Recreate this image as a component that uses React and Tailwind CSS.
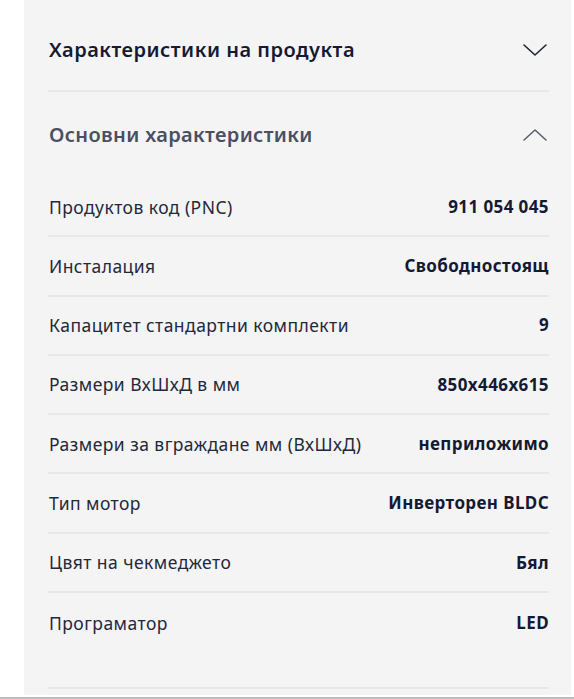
import React from "react";

const rows = [
  { label: "Продуктов код (PNC)", value: "911 054 045" },
  { label: "Инсталация", value: "Свободностоящ" },
  { label: "Капацитет стандартни комплекти", value: "9" },
  { label: "Размери ВхШхД в мм", value: "850x446x615" },
  { label: "Размери за вграждане мм (ВхШхД)", value: "неприложимо" },
  { label: "Тип мотор", value: "Инверторен BLDC" },
  { label: "Цвят на чекмеджето", value: "Бял" },
  { label: "Програматор", value: "LED" },
];

const Chevron = ({ up, color }) => (
  <svg width="26" height="16" viewBox="0 0 26 16" fill="none">
    <path
      d={up ? "M2 13 L13 3 L24 13" : "M2 3 L13 13 L24 3"}
      stroke={color}
      strokeWidth="1.6"
      strokeLinecap="round"
      strokeLinejoin="round"
    />
  </svg>
);

const App = () => {
  return (
    <div className="h-[699px] overflow-hidden bg-white font-['Noto_Sans','Lato',sans-serif]">
      <div className="flex h-[697px] flex-col">
        <div className="ml-[24px] mr-[3px] h-[695px] bg-[#f4f4f5] pl-[25px] pr-[22px]">
          {/* Product characteristics header */}
          <div className="-ml-[1px] flex h-[92px] items-center justify-between border-b-2 border-[#e8e8ea] pl-[1px] pt-[10px]">
            <h2 className="text-[20px] font-semibold tracking-[0.5px] text-[#141a33]">
              Характеристики на продукта
            </h2>
            <div className="mr-[1px]">
              <Chevron color="#1f2437" />
            </div>
          </div>

          {/* Main characteristics */}
          <div className="flex h-[86px] items-center justify-between">
            <h3 className="text-[20px] font-semibold tracking-[0.35px] text-[#4a4f63]">
              Основни характеристики
            </h3>
            <div className="mr-[1px]">
              <Chevron up color="#5a5f70" />
            </div>
          </div>

          {rows.map((row, index) => (
            <div
              key={index}
              className={
                index === rows.length - 1
                  ? "-ml-[1px] flex h-[96px] items-start justify-between border-b-2 border-[#e8e8ea] pl-[1px] pt-[17px]"
                  : "-ml-[1px] flex h-[59.3px] items-center justify-between border-b-2 border-[#e8e8ea] pl-[1px]"
              }
            >
              <span className="text-[17.5px] tracking-[0.45px] text-[#23283a]">{row.label}</span>
              <span className="text-[17px] font-bold tracking-[0.4px] text-[#141a33]">{row.value}</span>
            </div>
          ))}
        </div>
      </div>
      <div className="h-[2px] bg-[#bdbdbd]" />
    </div>
  );
};

export default App;
